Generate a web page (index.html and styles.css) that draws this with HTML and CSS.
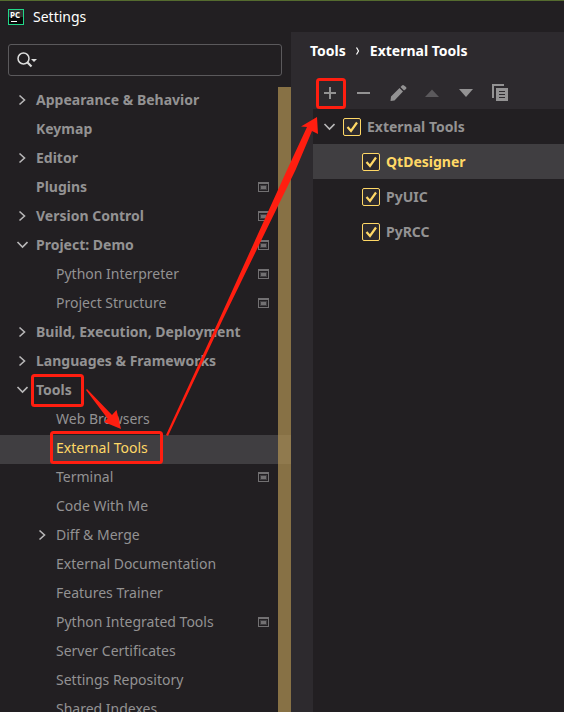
FILE: index.html
```html
<!DOCTYPE html>
<html lang="en">
<head>
<meta charset="utf-8">
<title>Settings</title>
<link rel="stylesheet" href="styles.css">
</head>
<body>
<svg class="defs" aria-hidden="true">
  <symbol id="right" viewBox="0 0 12 12"><path d="M3.5 1.5 8.500 6 3.500 10.500" fill="none" stroke="#b8b7b8" stroke-width="1.600"/></symbol>
  <symbol id="down" viewBox="0 0 12 12"><path d="M1.500 3 6.500 8 11.500 3" fill="none" stroke="#b8b7b8" stroke-width="1.600"/></symbol>
  <symbol id="proj" viewBox="0 0 11 10"><path d="M0 0h11v10H0zM1 2v7h9V2z" fill="#727072" fill-rule="evenodd"/><path d="M2 3h7v5H2z" fill="#403e41"/><path d="M3 4h5v3H3z" fill="#727072"/></symbol>
</svg>
<header class="titlebar">
  <svg width="16" height="16" viewBox="0 0 16 16" aria-hidden="true"><rect width="16" height="16" fill="#21d789"/><rect x="1" y="1" width="14" height="14" fill="#080808"/><path d="M1 1h14v7H1z" fill="#303030"/><text x="2" y="9" class="logo-text">PC</text><path d="M3 12h6v1H3z" fill="#fff"/></svg>
  <h1>Settings</h1>
</header>
<main class="content">
  <aside class="sidebar">
    <label class="search">
      <svg width="22" height="18" viewBox="0 0 22 18" aria-hidden="true"><circle cx="6.500" cy="7.500" r="5.500" fill="none" stroke="#ddd" stroke-width="1.500"/><path d="m10.500 11.500 4 4" stroke="#ddd" stroke-width="2.200"/><path d="M14 8h6l-3 3z" fill="#ddd"/></svg>
      <input type="search" aria-label="Search settings">
    </label>
    <nav class="nav">
      <ul>
        <li class="top"><svg class="arrow"><use href="#right"/></svg><a href="#">Appearance &amp; Behavior</a></li>
        <li class="top"><a href="#">Keymap</a></li>
        <li class="top"><svg class="arrow"><use href="#right"/></svg><a href="#">Editor</a></li>
        <li class="top"><a href="#">Plugins</a><svg class="proj"><use href="#proj"/></svg></li>
        <li class="top"><svg class="arrow"><use href="#right"/></svg><a href="#">Version Control</a><svg class="proj"><use href="#proj"/></svg></li>
        <li class="top"><svg class="arrow"><use href="#down"/></svg><a href="#">Project: Demo</a><svg class="proj"><use href="#proj"/></svg></li>
        <li><a href="#">Python Interpreter</a><svg class="proj"><use href="#proj"/></svg></li>
        <li><a href="#">Project Structure</a><svg class="proj"><use href="#proj"/></svg></li>
        <li class="top"><svg class="arrow"><use href="#right"/></svg><a href="#">Build, Execution, Deployment</a></li>
        <li class="top"><svg class="arrow"><use href="#right"/></svg><a href="#">Languages &amp; Frameworks</a></li>
        <li class="top"><svg class="arrow"><use href="#down"/></svg><a href="#">Tools</a></li>
        <li><a href="#">Web Browsers</a></li>
        <li class="selected"><a href="#" aria-current="page">External Tools</a></li>
        <li><a href="#">Terminal</a><svg class="proj"><use href="#proj"/></svg></li>
        <li><a href="#">Code With Me</a></li>
        <li><svg class="arrow"><use href="#right"/></svg><a href="#">Diff &amp; Merge</a></li>
        <li><a href="#">External Documentation</a></li>
        <li><a href="#">Features Trainer</a></li>
        <li><a href="#">Python Integrated Tools</a><svg class="proj"><use href="#proj"/></svg></li>
        <li><a href="#">Server Certificates</a></li>
        <li><a href="#">Settings Repository</a></li>
        <li><a href="#">Shared Indexes</a></li>
      </ul>
      <div class="scrollbar"></div>
    </nav>
  </aside>
  <section class="detail">
    <div class="crumbs"><a href="#">Tools</a><svg width="6" height="10" viewBox="0 0 6 10" aria-hidden="true"><path d="m1.500 1.500 2 3.500-2 3.500" fill="none" stroke="#fff" stroke-width="1.200"/></svg><span>External Tools</span></div>
    <div class="toolbar">
      <button type="button" aria-label="Add"><svg viewBox="0 0 18 18"><path d="M8 3h2v5h5v2h-5v5H8v-5H3V8h5z"/></svg></button>
      <button type="button" aria-label="Remove"><svg viewBox="0 0 18 18"><path d="M2 8h13v2H2z"/></svg></button>
      <button type="button" aria-label="Edit"><svg viewBox="0 0 18 18"><path d="m1.500 17 .5-4.500L10.500 4 14 7.500 5.500 16.500zM11.500 3 13 1.500q1-1 2 0L17 3q1 1 0 2L15 6.500z"/></svg></button>
      <button type="button" aria-label="Move up" disabled><svg viewBox="0 0 18 18"><path d="m2 13 7-7.500 7 7.500z"/></svg></button>
      <button type="button" aria-label="Move down"><svg viewBox="0 0 18 18"><path d="M2 5h14l-7 8z"/></svg></button>
      <button type="button" aria-label="Copy"><svg viewBox="0 0 18 18"><path d="M1 0h12v2H3v12H1z"/><path fill-rule="evenodd" d="M5 4h12v13H5zM8 7v1h6V7zM8 10v1h6v-1zM8 13v1h6v-1z"/></svg></button>
    </div>
    <div class="tree">
      <div class="node"><svg class="arrow"><use href="#down"/></svg><label><input type="checkbox" checked>External Tools</label></div>
      <div class="node child selected"><label><input type="checkbox" checked>QtDesigner</label></div>
      <div class="node child"><label><input type="checkbox" checked>PyUIC</label></div>
      <div class="node child"><label><input type="checkbox" checked>PyRCC</label></div>
    </div>
  </section>
</main>
<svg class="marks" width="564" height="712" viewBox="0 0 564 712" aria-hidden="true">
  <g fill="none" stroke="#ff1e10" stroke-width="3"><rect x="32.500" y="375.500" width="50" height="30" rx="2"/><rect x="51.500" y="432.500" width="110" height="30" rx="2"/><rect x="317.500" y="79.500" width="27" height="28" rx="2"/></g>
  <g fill="#ff1e10"><path d="M166 435 219 320 287 170 307 127 301 126.500 317 117 318 134 312 131 295.500 170 222.500 320 168 436z"/><path d="M86 390 87 389 112 415 116.500 410 121 429 104 422 107.500 418.500z"/></g>
</svg>
</body>
</html>
```
FILE: styles.css
```css
* { box-sizing: border-box; }
body {
  margin: 0;
  height: 100vh;
  display: flex;
  flex-direction: column;
  overflow: hidden;
  position: relative;
  background: #221f22;
  color: #939293;
  font: 14px/20px "Noto Sans", "Open Sans", sans-serif;
}
a { color: inherit; text-decoration: none; }
.defs { position: absolute; width: 0; height: 0; }
.titlebar {
  flex: none;
  display: flex;
  align-items: center;
  gap: 9px;
  height: 32px;
  padding-left: 8px;
  border-top: 1px solid #556b2f;
}
.titlebar h1 { margin: 0; color: #fff; font-size: 14px; font-weight: 400; }
.logo-text { font: bold 8px "Open Sans", sans-serif; fill: #fff; }
.content { flex: 1; min-height: 0; display: flex; }
.sidebar { flex: none; width: 291px; display: flex; flex-direction: column; padding-top: 12px; }
.search {
  flex: none;
  display: flex;
  align-items: center;
  height: 32px;
  margin: 0 9px 11px 8px;
  padding-left: 8px;
  border: 1px solid #5b595c;
  border-radius: 3px;
}
.search input { flex: 1; min-width: 0; border: 0; outline: 0; background: none; color: #fff; font: inherit; }
.nav { flex: 1; min-height: 0; position: relative; overflow: hidden; }
.nav ul { list-style: none; margin: 0; padding: 0; }
.nav li {
  display: flex;
  align-items: center;
  height: 29px;
  padding: 0 22px 4px 56px;
}
.nav li.top { padding-left: 36px; font-weight: 700; }
.arrow { flex: none; width: 12px; height: 12px; margin: 0 8px 0 -20px; }
.proj { width: 11px; height: 10px; margin-left: auto; }
.selected { background: #403e41; color: #ffd866; }
.scrollbar { position: absolute; top: 0; right: 0; bottom: 0; width: 13px; background: rgba(175, 145, 83, .72); }
.detail { flex: 1; min-width: 0; display: flex; flex-direction: column; background: #2d2a2e; }
.crumbs { display: flex; align-items: center; gap: 9px; height: 38px; padding-left: 19px; color: #fff; font-weight: 700; }
.toolbar { display: flex; height: 39px; padding: 7px 0 0 22px; }
.toolbar button { width: 34px; padding: 0; border: 0; background: none; display: grid; place-items: center; }
.toolbar svg { width: 18px; height: 18px; fill: #939293; }
.toolbar button:disabled svg { fill: #5b595c; }
.tree { flex: 1; margin-left: 22px; background: #221f22; font-weight: 700; }
.node { display: flex; align-items: center; height: 35px; padding-left: 30px; }
.node.child { padding-left: 49px; }
.node label { display: flex; align-items: center; gap: 6px; }
.node input {
  appearance: none;
  width: 18px;
  height: 18px;
  margin: 0;
  border: 1px solid #ffd866;
  border-radius: 2px;
  background: #2d2a2e url("data:image/svg+xml,%3Csvg xmlns='http://www.w3.org/2000/svg' viewBox='0 0 16 16'%3E%3Cpath d='M3.500 8l3.500 4 6-8.500' fill='none' stroke='%23ffd866' stroke-width='2.200'/%3E%3C/svg%3E");
}
.marks { position: absolute; top: 0; left: 0; pointer-events: none; }
```
